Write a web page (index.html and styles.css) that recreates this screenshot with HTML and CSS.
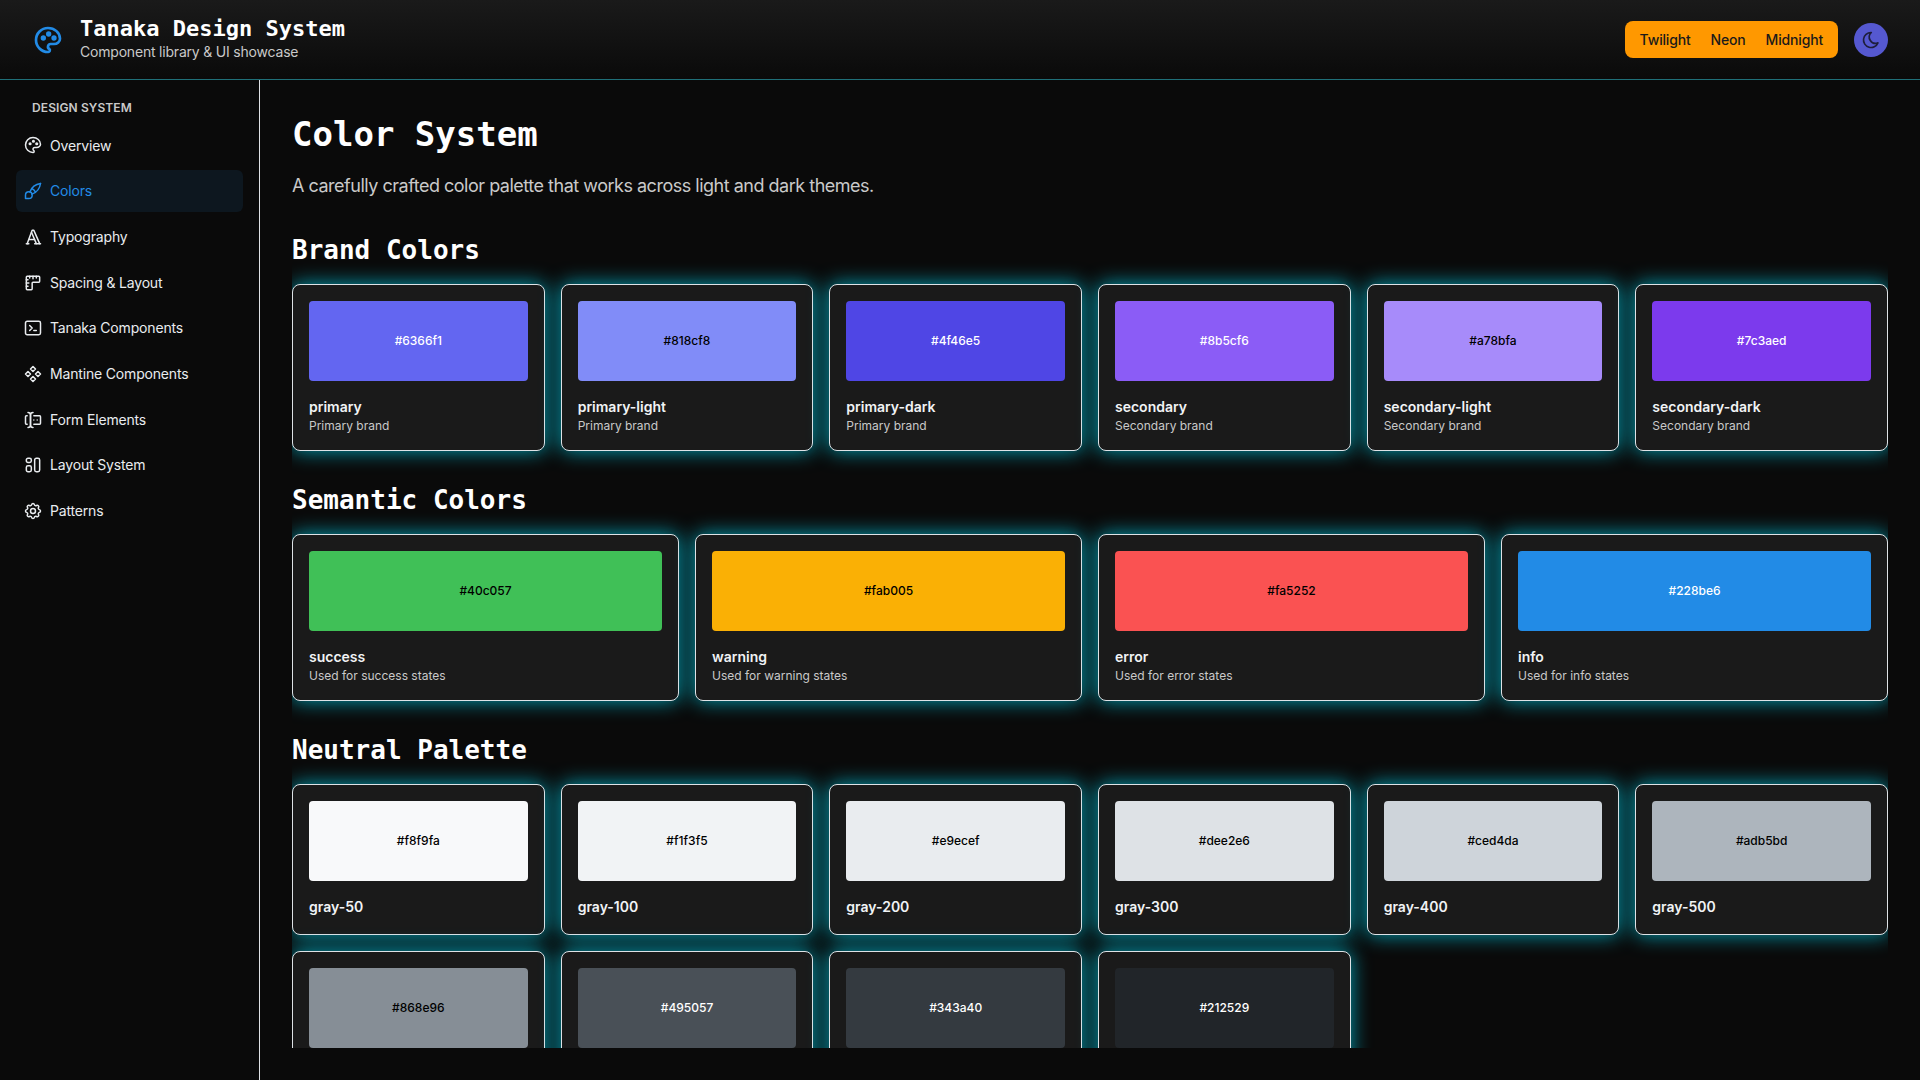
FILE: index.html
```html
<!DOCTYPE html>
<html lang="en">
<head>
  <meta charset="UTF-8" />
  <title>Tanaka Design System</title>
  <link rel="stylesheet" href="styles.css">
</head>
<body>
  <header class="topbar">
    <div class="brand">
      <svg class="brand-icon" viewBox="0 0 24 24"><path d="M12 21a9 9 0 0 1 0 -18c4.97 0 9 3.582 9 8c0 1.06 -.474 2.078 -1.318 2.828c-.844 .75 -1.989 1.172 -3.182 1.172h-2.5a2 2 0 0 0 -1 3.75a1.3 1.3 0 0 1 -1 2.25"/><path d="M8.5 10.5m-1 0a1 1 0 1 0 2 0a1 1 0 1 0 -2 0"/><path d="M12.5 7.5m-1 0a1 1 0 1 0 2 0a1 1 0 1 0 -2 0"/><path d="M16.5 10.5m-1 0a1 1 0 1 0 2 0a1 1 0 1 0 -2 0"/></svg>
      <div>
        <div class="brand-title">Tanaka Design System</div>
        <div class="brand-sub">Component library &amp; UI showcase</div>
      </div>
    </div>
    <div class="topbar-right">
      <div class="segmented">
        <span>Twilight</span>
        <span>Neon</span>
        <span>Midnight</span>
      </div>
      <button class="theme-btn">
        <svg viewBox="0 0 24 24"><path d="M12 3c.132 0 .263 0 .393 0a7.5 7.5 0 0 0 7.92 12.446a9 9 0 1 1 -8.313 -12.454z"/></svg>
      </button>
    </div>
  </header>

  <div class="shell">
    <nav class="sidebar">
      <div class="nav-label">Design System</div>
      <a class="nav-link">
        <svg viewBox="0 0 24 24"><path d="M12 21a9 9 0 0 1 0 -18c4.97 0 9 3.582 9 8c0 1.06 -.474 2.078 -1.318 2.828c-.844 .75 -1.989 1.172 -3.182 1.172h-2.5a2 2 0 0 0 -1 3.75a1.3 1.3 0 0 1 -1 2.25"/><path d="M8.5 10.5m-1 0a1 1 0 1 0 2 0a1 1 0 1 0 -2 0"/><path d="M12.5 7.5m-1 0a1 1 0 1 0 2 0a1 1 0 1 0 -2 0"/><path d="M16.5 10.5m-1 0a1 1 0 1 0 2 0a1 1 0 1 0 -2 0"/></svg>
        Overview
      </a>
      <a class="nav-link active">
        <svg viewBox="0 0 24 24"><path d="M3 21v-4a4 4 0 1 1 4 4h-4"/><path d="M21 3a16 16 0 0 0 -12.8 10.2"/><path d="M21 3a16 16 0 0 1 -10.2 12.8"/><path d="M10.6 9a9 9 0 0 1 4.4 4.4"/></svg>
        Colors
      </a>
      <a class="nav-link">
        <svg viewBox="0 0 24 24"><path d="M4 20l3 0"/><path d="M14 20l7 0"/><path d="M6.9 15l6.9 0"/><path d="M10.2 6.3l5.8 13.7"/><path d="M5 20l6 -16l2 0l7 16"/></svg>
        Typography
      </a>
      <a class="nav-link">
        <svg viewBox="0 0 24 24"><path d="M5 4h14a1 1 0 0 1 1 1v5a1 1 0 0 1 -1 1h-7a1 1 0 0 0 -1 1v7a1 1 0 0 1 -1 1h-5a1 1 0 0 1 -1 -1v-14a1 1 0 0 1 1 -1"/><path d="M4 8l2 0"/><path d="M4 12l3 0"/><path d="M4 16l2 0"/><path d="M8 4l0 2"/><path d="M12 4l0 3"/><path d="M16 4l0 2"/></svg>
        Spacing &amp; Layout
      </a>
      <a class="nav-link">
        <svg viewBox="0 0 24 24"><path d="M8 9l3 3l-3 3"/><path d="M13 15l3 0"/><path d="M3 4m0 2a2 2 0 0 1 2 -2h14a2 2 0 0 1 2 2v12a2 2 0 0 1 -2 2h-14a2 2 0 0 1 -2 -2z"/></svg>
        Tanaka Components
      </a>
      <a class="nav-link">
        <svg viewBox="0 0 24 24"><path d="M3 12l3 3l3 -3l-3 -3z"/><path d="M15 12l3 3l3 -3l-3 -3z"/><path d="M9 6l3 3l3 -3l-3 -3z"/><path d="M9 18l3 3l3 -3l-3 -3z"/></svg>
        Mantine Components
      </a>
      <a class="nav-link">
        <svg viewBox="0 0 24 24"><path d="M12 3a3 3 0 0 0 -3 3v12a3 3 0 0 0 3 3"/><path d="M6 3a3 3 0 0 1 3 3v12a3 3 0 0 1 -3 3"/><path d="M13 7h7a1 1 0 0 1 1 1v8a1 1 0 0 1 -1 1h-7"/><path d="M5 7h-1a1 1 0 0 0 -1 1v8a1 1 0 0 0 1 1h1"/><path d="M17 12h.01"/><path d="M13 12h.01"/></svg>
        Form Elements
      </a>
      <a class="nav-link">
        <svg viewBox="0 0 24 24"><path d="M4 4m0 2a2 2 0 0 1 2 -2h2a2 2 0 0 1 2 2v1a2 2 0 0 1 -2 2h-2a2 2 0 0 1 -2 -2z"/><path d="M4 13m0 2a2 2 0 0 1 2 -2h2a2 2 0 0 1 2 2v3a2 2 0 0 1 -2 2h-2a2 2 0 0 1 -2 -2z"/><path d="M14 4m0 2a2 2 0 0 1 2 -2h2a2 2 0 0 1 2 2v12a2 2 0 0 1 -2 2h-2a2 2 0 0 1 -2 -2z"/></svg>
        Layout System
      </a>
      <a class="nav-link">
        <svg viewBox="0 0 24 24"><path d="M10.325 4.317c.426 -1.756 2.924 -1.756 3.35 0a1.724 1.724 0 0 0 2.573 1.066c1.543 -.94 3.31 .826 2.37 2.37a1.724 1.724 0 0 0 1.065 2.572c1.756 .426 1.756 2.924 0 3.35a1.724 1.724 0 0 0 -1.066 2.573c.94 1.543 -.826 3.31 -2.37 2.37a1.724 1.724 0 0 0 -2.572 1.065c-.426 1.756 -2.924 1.756 -3.35 0a1.724 1.724 0 0 0 -2.573 -1.066c-1.543 .94 -3.31 -.826 -2.37 -2.37a1.724 1.724 0 0 0 -1.065 -2.572c-1.756 -.426 -1.756 -2.924 0 -3.35a1.724 1.724 0 0 0 1.066 -2.573c-.94 -1.543 .826 -3.31 2.37 -2.37c1 .608 2.296 .07 2.572 -1.065z"/><path d="M9 12a3 3 0 1 0 6 0a3 3 0 0 0 -6 0"/></svg>
        Patterns
      </a>
    </nav>

    <main class="main">
      <div class="content">
        <h1>Color System</h1>
        <p class="lead">A carefully crafted color palette that works across light and dark themes.</p>

        <h2>Brand Colors</h2>
        <div class="grid six">
          <div class="card">
            <div class="swatch light-text" style="background:#6366f1">#6366f1</div>
            <div class="name">primary</div>
            <div class="desc">Primary brand</div>
          </div>
          <div class="card">
            <div class="swatch" style="background:#818cf8">#818cf8</div>
            <div class="name">primary-light</div>
            <div class="desc">Primary brand</div>
          </div>
          <div class="card">
            <div class="swatch light-text" style="background:#4f46e5">#4f46e5</div>
            <div class="name">primary-dark</div>
            <div class="desc">Primary brand</div>
          </div>
          <div class="card">
            <div class="swatch light-text" style="background:#8b5cf6">#8b5cf6</div>
            <div class="name">secondary</div>
            <div class="desc">Secondary brand</div>
          </div>
          <div class="card">
            <div class="swatch" style="background:#a78bfa">#a78bfa</div>
            <div class="name">secondary-light</div>
            <div class="desc">Secondary brand</div>
          </div>
          <div class="card">
            <div class="swatch light-text" style="background:#7c3aed">#7c3aed</div>
            <div class="name">secondary-dark</div>
            <div class="desc">Secondary brand</div>
          </div>
        </div>

        <h2>Semantic Colors</h2>
        <div class="grid four">
          <div class="card">
            <div class="swatch" style="background:#40c057">#40c057</div>
            <div class="name">success</div>
            <div class="desc">Used for success states</div>
          </div>
          <div class="card">
            <div class="swatch" style="background:#fab005">#fab005</div>
            <div class="name">warning</div>
            <div class="desc">Used for warning states</div>
          </div>
          <div class="card">
            <div class="swatch" style="background:#fa5252">#fa5252</div>
            <div class="name">error</div>
            <div class="desc">Used for error states</div>
          </div>
          <div class="card">
            <div class="swatch light-text" style="background:#228be6">#228be6</div>
            <div class="name">info</div>
            <div class="desc">Used for info states</div>
          </div>
        </div>

        <h2>Neutral Palette</h2>
        <div class="grid six">
          <div class="card">
            <div class="swatch" style="background:#f8f9fa">#f8f9fa</div>
            <div class="name">gray-50</div>
          </div>
          <div class="card">
            <div class="swatch" style="background:#f1f3f5">#f1f3f5</div>
            <div class="name">gray-100</div>
          </div>
          <div class="card">
            <div class="swatch" style="background:#e9ecef">#e9ecef</div>
            <div class="name">gray-200</div>
          </div>
          <div class="card">
            <div class="swatch" style="background:#dee2e6">#dee2e6</div>
            <div class="name">gray-300</div>
          </div>
          <div class="card">
            <div class="swatch" style="background:#ced4da">#ced4da</div>
            <div class="name">gray-400</div>
          </div>
          <div class="card">
            <div class="swatch" style="background:#adb5bd">#adb5bd</div>
            <div class="name">gray-500</div>
          </div>
          <div class="card">
            <div class="swatch" style="background:#868e96">#868e96</div>
            <div class="name">gray-600</div>
          </div>
          <div class="card">
            <div class="swatch light-text" style="background:#495057">#495057</div>
            <div class="name">gray-700</div>
          </div>
          <div class="card">
            <div class="swatch light-text" style="background:#343a40">#343a40</div>
            <div class="name">gray-800</div>
          </div>
          <div class="card">
            <div class="swatch light-text" style="background:#212529">#212529</div>
            <div class="name">gray-900</div>
          </div>
        </div>
      </div>
    </main>
  </div>
</body>
</html>
```

FILE: styles.css
```css
* {
  box-sizing: border-box;
}
html, body {
  height: 100%;
}
body {
  margin: 0;
  display: flex;
  flex-direction: column;
  overflow: hidden;
  background-color: #0a0a0a;
  color: #f8f9fa;
  font-family: Inter, "Noto Sans", sans-serif;
  font-size: 14px;
  line-height: 1.55;
}
svg {
  fill: none;
  stroke: currentColor;
  stroke-linecap: round;
  stroke-linejoin: round;
}

/* top bar */
.topbar {
  flex: none;
  height: 80px;
  display: flex;
  align-items: center;
  justify-content: space-between;
  padding: 0 32px;
  background: linear-gradient(180deg, #1a1a1a 0%, #0a0a0a 100%);
  border-bottom: 1px solid #1f6f78;
}
.brand {
  display: flex;
  align-items: center;
  gap: 16px;
}
.brand-icon {
  width: 32px;
  height: 32px;
  color: #228be6;
  stroke-width: 2;
}
.brand-title {
  font-family: "DejaVu Sans Mono", monospace;
  font-size: 22px;
  font-weight: 700;
  line-height: 22px;
  margin-bottom: 2px;
  color: #fff;
}
.brand-sub {
  font-size: 14px;
  letter-spacing: -0.2px;
  color: #c9c9c9;
  line-height: 20px;
}
.topbar-right {
  display: flex;
  align-items: center;
  gap: 16px;
}
.segmented {
  display: flex;
  padding: 4px 5px;
  height: 37px;
  align-items: center;
  border-radius: 8px;
  background-color: #ff9800;
  color: #1a1a1a;
  font-weight: 500;
  letter-spacing: -0.17px;
}
.segmented span {
  padding: 0 10px;
}
.theme-btn {
  width: 34px;
  height: 34px;
  padding: 0;
  border: 0;
  border-radius: 50%;
  background-color: #5558d0;
  color: #1e1e3c;
  display: flex;
  align-items: center;
  justify-content: center;
}
.theme-btn svg {
  width: 20px;
  height: 20px;
  stroke-width: 2;
}

/* sidebar */
.shell {
  flex: 1;
  min-height: 0;
  display: flex;
}
.sidebar {
  flex: none;
  width: 260px;
  padding: 16px;
  display: flex;
  flex-direction: column;
  gap: 4px;
  border-right: 1px solid #dee2e6;
}
.nav-label {
  padding: 3px 16px 0;
  margin-bottom: 3px;
  font-size: 12px;
  font-weight: 600;
  letter-spacing: 0.1px;
  text-transform: uppercase;
  color: #c9c9c9;
}
.nav-link {
  display: flex;
  align-items: center;
  gap: 7px;
  height: 41.7px;
  padding: 0 7px;
  border-radius: 6px;
  color: #e9ecef;
  letter-spacing: -0.17px;
}
.nav-link svg {
  width: 20px;
  height: 20px;
  stroke-width: 1.8;
}
.nav-link.active {
  background-color: #0d171f;
  color: #228be6;
}

/* main area */
.main {
  flex: 1;
  min-width: 0;
  padding: 32px;
}
.content {
  height: 100%;
  overflow: hidden;
}
h1 {
  margin: 0 0 16px;
  font-family: "DejaVu Sans Mono", monospace;
  font-size: 34px;
  font-weight: 700;
  line-height: 1.3;
  color: #fff;
}
.lead {
  margin: 0 0 33px;
  font-size: 18px;
  letter-spacing: -0.49px;
  color: #c9c9c9;
}
h2 {
  margin: 32px 0 16px;
  font-family: "DejaVu Sans Mono", monospace;
  font-size: 26px;
  font-weight: 700;
  line-height: 1.35;
  color: #fff;
}
.lead + h2 {
  margin-top: 0;
}
.grid {
  display: grid;
  gap: 16px;
}
.six {
  grid-template-columns: repeat(6, 1fr);
}
.four {
  grid-template-columns: repeat(4, 1fr);
}
.card {
  padding: 16px;
  background-color: #1a1a1a;
  border: 1px solid #dee2e6;
  border-radius: 8px;
  box-shadow: 0 0 20px rgba(0, 200, 225, 0.8);
}
.swatch {
  height: 80px;
  margin-bottom: 16px;
  display: flex;
  align-items: center;
  justify-content: center;
  border-radius: 4px;
  font-size: 12px;
  font-weight: 500;
  color: #000;
}
.swatch.light-text {
  color: #fff;
}
.name {
  font-size: 14px;
  font-weight: 600;
  line-height: 20.6px;
  color: #f1f3f5;
}
.desc {
  font-size: 12px;
  line-height: 16.4px;
  color: #c9c9c9;
}
```
